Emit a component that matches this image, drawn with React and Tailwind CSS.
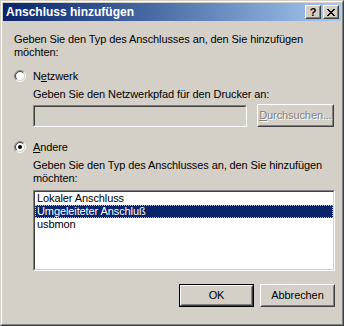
import React from "react";

function Radio({ checked }) {
  const r1 = 5.5, r2 = 4.5, c = 6, k = 0.7071;
  const arc = (r, sweep) =>
    sweep
      ? `M ${c - r * k} ${c + r * k} A ${r} ${r} 0 0 1 ${c + r * k} ${c - r * k}`
      : `M ${c + r * k} ${c - r * k} A ${r} ${r} 0 0 1 ${c - r * k} ${c + r * k}`;
  return (
    <svg width="12" height="12" viewBox="0 0 12 12" className="shrink-0">
      <circle cx="6" cy="6" r="4.5" fill="#ffffff" />
      <path d={arc(r1, true)} stroke="#808080" strokeWidth="1" fill="none" />
      <path d={arc(r2, true)} stroke="#404040" strokeWidth="1" fill="none" />
      <path d={arc(r1, false)} stroke="#ffffff" strokeWidth="1" fill="none" />
      <path d={arc(r2, false)} stroke="#d4d0c8" strokeWidth="1" fill="none" />
      {checked && <circle cx="6" cy="6" r="2" fill="#000000" />}
    </svg>
  );
}

function RaisedButton({ children, isDefault, className = "" }) {
  const inner = (
    <div className="h-full w-full border border-t-white border-l-white border-r-[#404040] border-b-[#404040]">
      <div className="h-full w-full border border-t-[#d4d0c8] border-l-[#d4d0c8] border-r-[#808080] border-b-[#808080] flex items-center justify-center">
        {children}
      </div>
    </div>
  );
  if (isDefault) {
    return <div className={`border border-black ${className}`}>{inner}</div>;
  }
  return <div className={className}>{inner}</div>;
}

function Sunken({ children, className = "" }) {
  return (
    <div className={`border border-t-[#808080] border-l-[#808080] border-r-white border-b-white ${className}`}>
      <div className="h-full w-full border border-t-[#404040] border-l-[#404040] border-r-[#d4d0c8] border-b-[#d4d0c8]">
        {children}
      </div>
    </div>
  );
}

function TitleBtn({ children }) {
  return (
    <div className="w-[16px] h-[14px] bg-[#d4d0c8] border border-t-white border-l-white border-r-[#404040] border-b-[#404040]">
      <div className="h-full w-full border border-t-[#d4d0c8] border-l-[#d4d0c8] border-r-[#808080] border-b-[#808080] flex items-center justify-center">
        {children}
      </div>
    </div>
  );
}

export default function App() {
  return (
    <div className="w-[344px] h-[326px] bg-[#d4d0c8] font-['Liberation_Sans',sans-serif] text-[11px] leading-[13px] tracking-[-0.1px] text-black select-none">
      <div className="h-full w-full border border-t-[#d4d0c8] border-l-[#d4d0c8] border-r-[#404040] border-b-[#404040]">
        <div className="h-full w-full border border-t-white border-l-white border-r-[#808080] border-b-[#808080] p-px flex flex-col">
          {/* Title bar */}
          <div className="h-[18px] bg-linear-to-r from-[#0a246a] to-[#a6caf0] flex items-center pl-[3px] pr-[2px] shrink-0">
            <span className="text-white font-bold text-[12px] leading-[14px] tracking-normal flex-1">Anschluss hinzufügen</span>
            <div className="flex gap-[2px]">
              <TitleBtn>
                <span className="font-bold text-[11px] leading-[10px] tracking-normal text-black -mt-px">?</span>
              </TitleBtn>
              <TitleBtn>
                <svg width="8" height="7" viewBox="0 0 8 7" shapeRendering="crispEdges">
                  <path d="M0 0h2v1h-2zM6 0h2v1h-2zM1 1h2v1h-2zM5 1h2v1h-2zM2 2h4v1h-4zM3 3h2v1h-2zM2 4h4v1h-4zM1 5h2v1h-2zM5 5h2v1h-2zM0 6h2v1h-2zM6 6h2v1h-2z" fill="#000" />
                </svg>
              </TitleBtn>
            </div>
          </div>

          {/* Body */}
          <div className="flex-1 flex flex-col pl-[11px] pr-[6px]">
            <p className="mt-[12px] w-[300px]">
              Geben Sie den Typ des Anschlusses an, den Sie hinzufügen möchten:
            </p>

            <div className="mt-[10px] flex items-center h-[14px]">
              <Radio />
              <span className="ml-[7px]">
                N<span className="underline">e</span>tzwerk
              </span>
            </div>

            <div className="pl-[19px] flex flex-col">
              <p className="mt-[5px]">Geben Sie den Netzwerkpfad für den Drucker an:</p>
              <div className="mt-[3px] flex items-center">
                <Sunken className="w-[214px] h-[22px] bg-[#d4d0c8]" />
                <RaisedButton className="ml-[10px] w-[77px] h-[23px]">
                  <span className="text-[#808080] [text-shadow:1px_1px_0_#ffffff]">
                    <span className="underline">D</span>urchsuchen...
                  </span>
                </RaisedButton>
              </div>
            </div>

            <div className="mt-[13px] flex items-center h-[14px]">
              <Radio checked />
              <span className="ml-[7px]">
                <span className="underline">A</span>ndere
              </span>
            </div>

            <div className="pl-[19px] flex flex-col">
              <p className="mt-[5px] w-[302px]">
                Geben Sie den Typ des Anschlusses an, den Sie hinzufügen möchten:
              </p>
              <Sunken className="mt-[5px] w-[302px] h-[81px] bg-white">
                <div className="flex flex-col">
                  <div className="h-[13px] pl-[2px] leading-[13px]">Lokaler Anschluss</div>
                  <div className="h-[13px] pl-[2px] leading-[13px] bg-[#0a246a] text-white outline-1 outline-dotted outline-[#c0c0c0] -outline-offset-1">
                    Umgeleiteter Anschluß
                  </div>
                  <div className="h-[13px] pl-[2px] leading-[13px]">usbmon</div>
                </div>
              </Sunken>
            </div>

            <div className="mt-[13px] flex justify-end gap-[6px]">
              <RaisedButton isDefault className="w-[75px] h-[23px]">
                <span>OK</span>
              </RaisedButton>
              <RaisedButton className="w-[75px] h-[23px]">
                <span>Abbrechen</span>
              </RaisedButton>
            </div>
          </div>
        </div>
      </div>
    </div>
  );
}
